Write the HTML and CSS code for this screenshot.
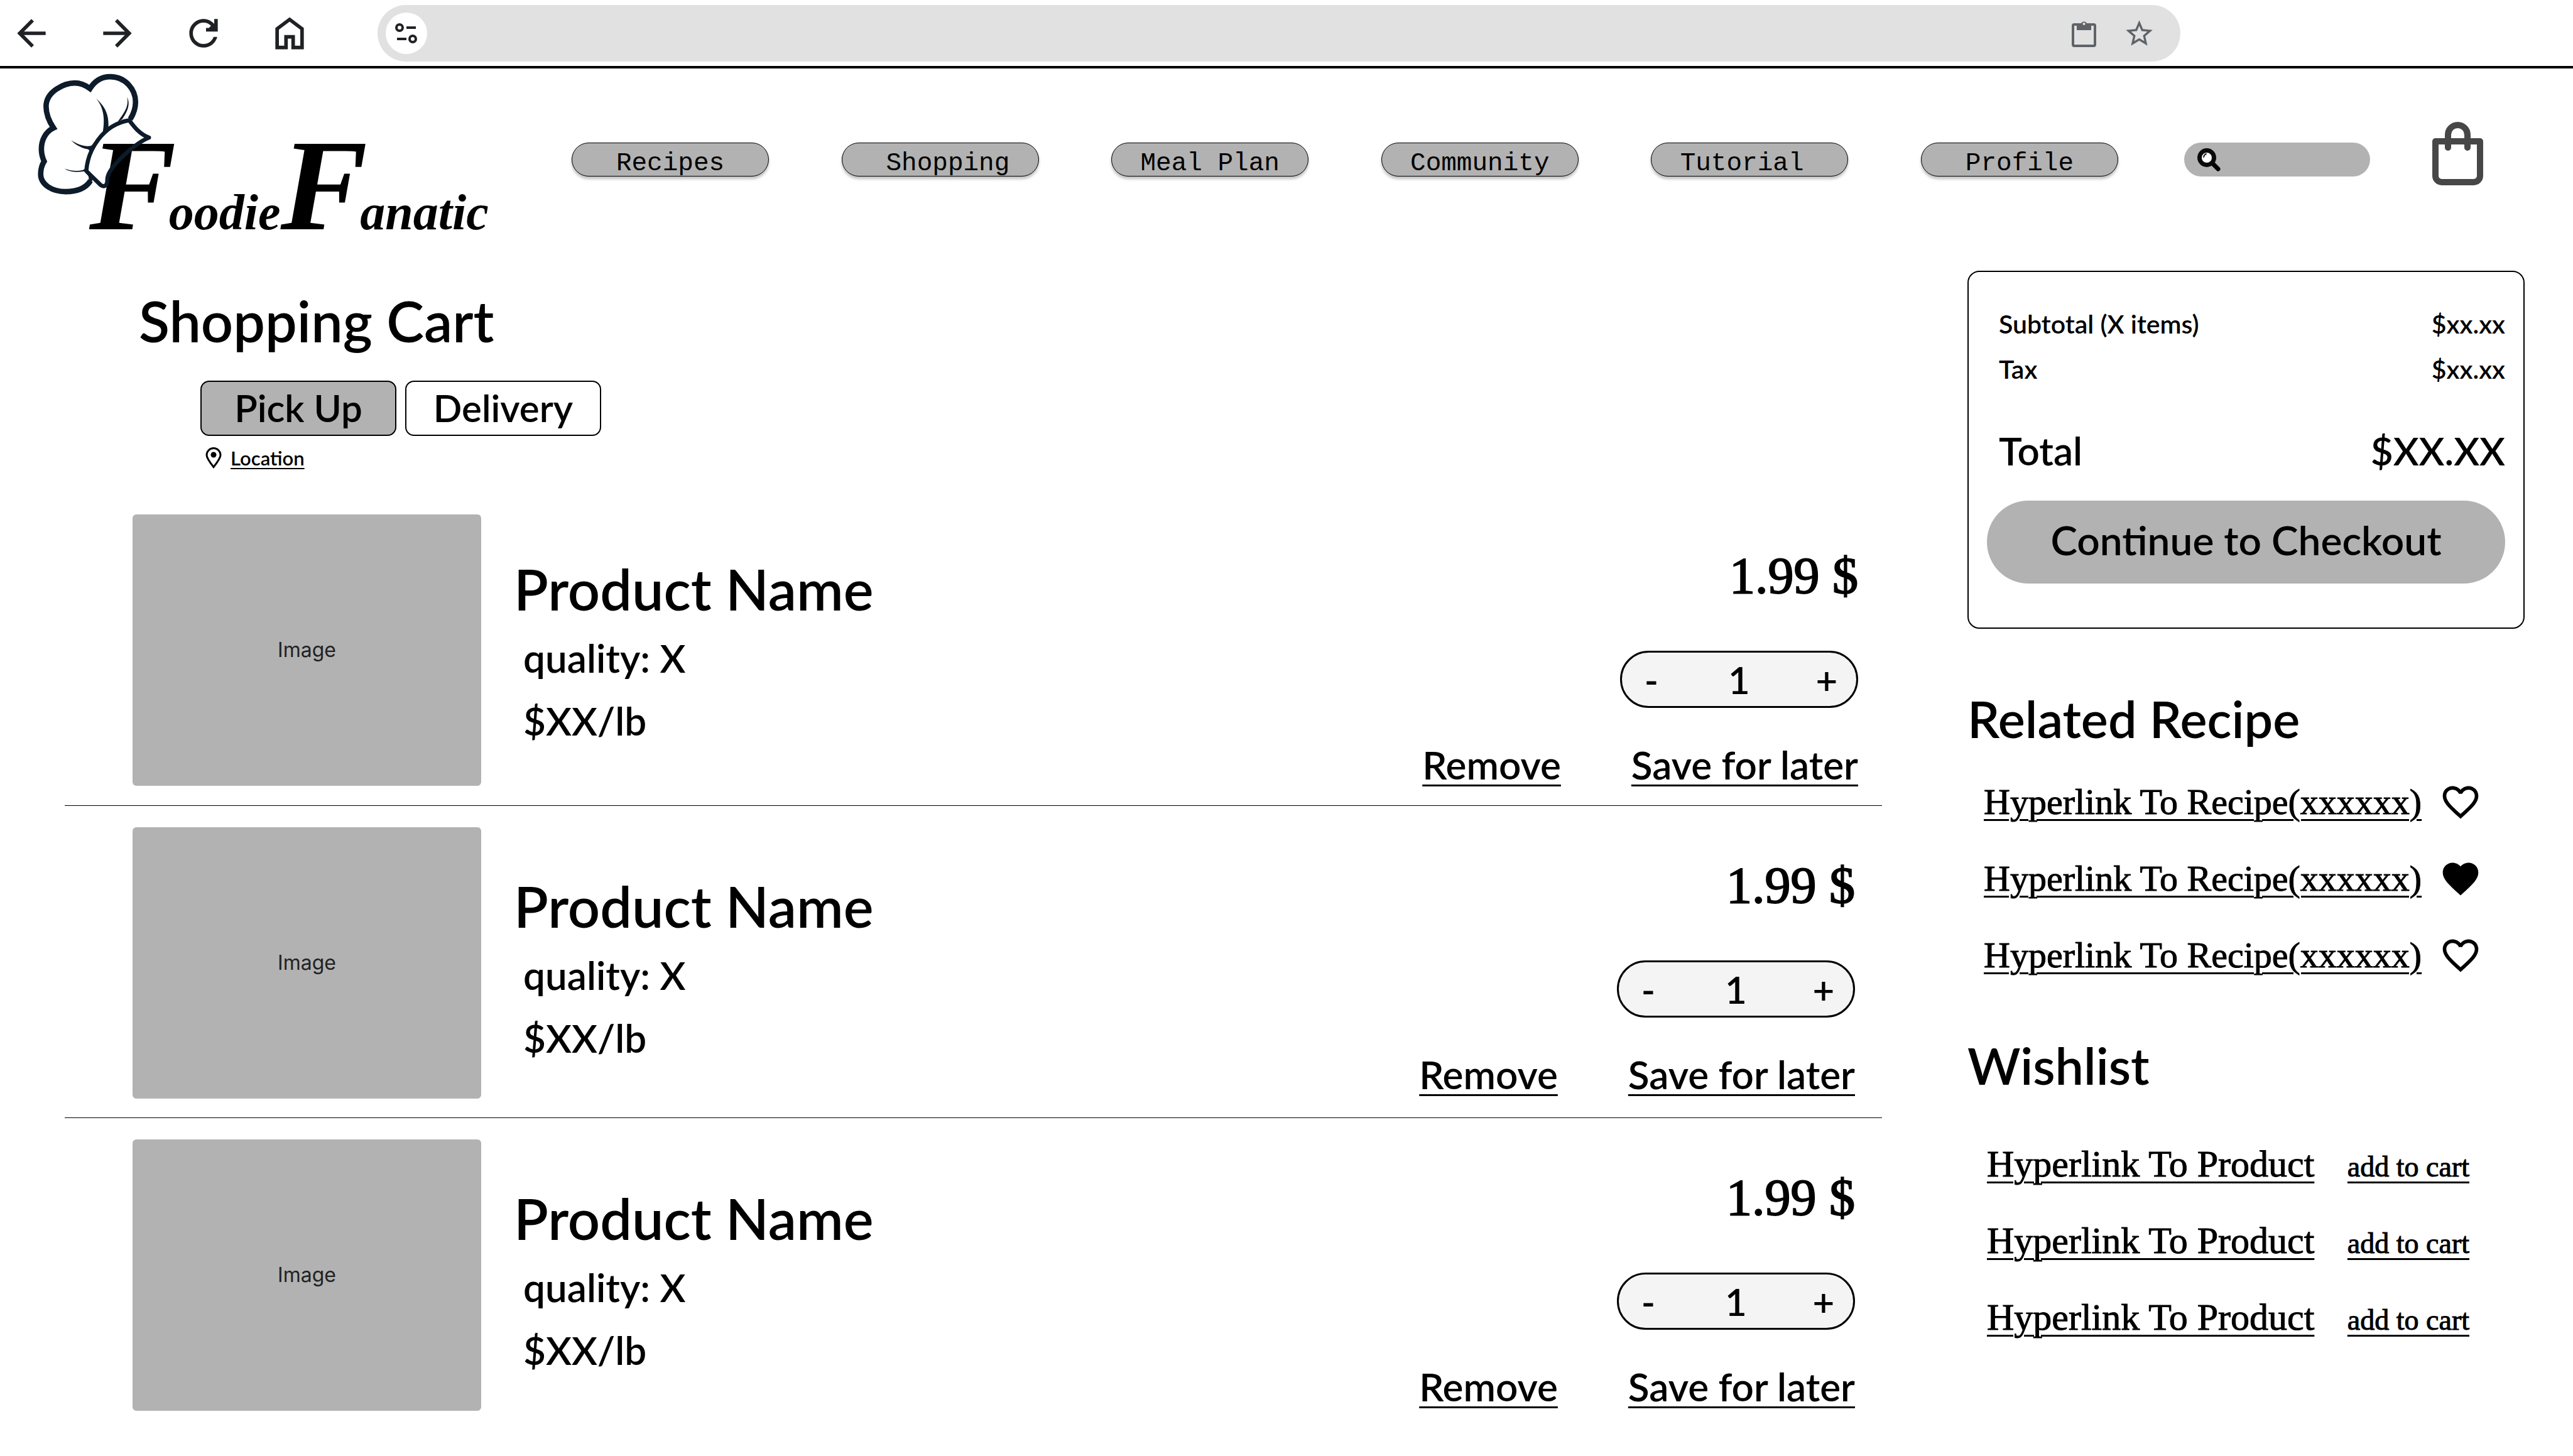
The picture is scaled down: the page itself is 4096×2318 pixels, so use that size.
FILE: index.html
```html
<!DOCTYPE html>
<html lang="en">
<head>
<meta charset="utf-8">
<title>FoodieFanatic – Shopping Cart</title>
<link rel="stylesheet" href="styles.css">
</head>
<body>
<svg class="sprite" aria-hidden="true">
  <symbol id="heart" viewBox="0 0 24 24"><path d="M16.5 3c-1.74 0-3.41.81-4.5 2.09C10.91 3.81 9.24 3 7.5 3 4.42 3 2 5.42 2 8.5c0 3.78 3.4 6.86 8.55 11.54L12 21.35l1.45-1.32C18.6 15.36 22 12.28 22 8.5 22 5.42 19.58 3 16.5 3zm-4.4 15.55l-.1.1-.1-.1C7.14 14.24 4 11.39 4 8.5 4 6.5 5.5 5 7.5 5c1.54 0 3.04.99 3.57 2.36h1.87C13.46 5.99 14.96 5 16.5 5c2 0 3.5 1.5 3.5 3.5 0 2.89-3.14 5.74-7.9 10.05z"/></symbol>
  <symbol id="heart-full" viewBox="0 0 24 24"><path d="M12 21.35l-1.45-1.32C5.4 15.36 2 12.28 2 8.5 2 5.42 4.42 3 7.5 3c1.74 0 3.41.81 4.5 2.09C13.09 3.81 14.76 3 16.5 3 19.58 3 22 5.42 22 8.5c0 3.78-3.4 6.86-8.55 11.54L12 21.35z"/></symbol>
</svg>

<div class="browser">
  <div class="browser-nav">
    <button type="button" class="tool" aria-label="Back"><svg viewBox="0 0 24 24"><path d="M20 11H7.83l5.59-5.59L12 4l-8 8 8 8 1.41-1.41L7.83 13H20v-2z"/></svg></button>
    <button type="button" class="tool" aria-label="Forward"><svg viewBox="0 0 24 24"><path d="M12 4l-1.41 1.41L16.17 11H4v2h12.17l-5.58 5.59L12 20l8-8z"/></svg></button>
    <button type="button" class="tool" aria-label="Reload"><svg viewBox="0 0 24 24"><path d="M17.65 6.35C16.2 4.9 14.21 4 12 4c-4.42 0-7.99 3.58-7.99 8s3.57 8 7.99 8c3.73 0 6.84-2.55 7.73-6h-2.08c-.82 2.33-3.04 4-5.65 4-3.31 0-6-2.69-6-6s2.69-6 6-6c1.66 0 3.14.69 4.22 1.78L15 9h-1.600v2H20V4h-2v2.700z"/></svg></button>
    <button type="button" class="tool" aria-label="Home"><svg viewBox="0 -960 960 960"><path d="M240-200h120v-240h240v240h120v-360L480-740 240-560v360Zm-80 80v-480l320-240 320 240v480H520v-240h-80v240H160Z"/></svg></button>
  </div>
  <div class="address">
    <button type="button" class="site-info" aria-label="Site information">
      <svg viewBox="0 0 36 34" fill="none" stroke="#202124" stroke-width="4"><circle cx="7" cy="8" r="5"/><path d="M18 8h15M3 26h15"/><circle cx="28" cy="26" r="5"/></svg>
    </button>
    <input class="address-input" type="text" aria-label="Address">
    <button type="button" class="address-tool" aria-label="Clipboard"><svg viewBox="0 0 51 51"><path fill="#5f6368" fill-rule="evenodd" d="M6 13a4 4 0 0 1 4-4h11a5 5 0 0 1 9 0h11a4 4 0 0 1 4 4v30a4 4 0 0 1-4 4H10a4 4 0 0 1-4-4zM10 13v30h31V13h-4v7H14V13zM25.500 8a2 2 0 1 0 .1 0z"/></svg></button>
    <button type="button" class="address-tool" aria-label="Bookmark"><svg viewBox="0 0 24 24"><path fill="#5f6368" d="M22 9.240l-7.190-.62L12 2 9.190 8.630 2 9.240l5.460 4.730L5.820 21 12 17.270 18.180 21l-1.630-7.030L22 9.240zM12 15.400l-3.760 2.270 1-4.280-3.320-2.880 4.380-.38L12 6.100l1.710 4.040 4.380.38-3.320 2.880 1 4.280L12 15.400z"/></svg></button>
  </div>
</div>

<header class="site-header">
  <a class="logo" href="#" aria-label="FoodieFanatic">
    <span class="logo-initial">F</span><span class="logo-rest">oodie</span><span class="logo-initial">F</span><span class="logo-rest">anatic</span>
    <svg class="logo-hat" viewBox="80 50 776 828" fill="none" stroke="#0d1b2a" stroke-width="37" stroke-linejoin="miter">
      <path d="M440 783C410 830 350 857 270 857C180 857 100 810 100 738C100 710 105 680 124 650C112 625 105 600 105 565C105 510 130 450 188 422C160 380 137 330 137 275C137 170 265 115 333 115C370 115 400 125 437 153C470 100 520 72 575 72C680 72 748 160 748 245C748 285 735 325 712 362"/>
      <path stroke-width="28" stroke-linejoin="round" d="M705 370C735 410 775 465 840 488C750 525 555 690 555 775C556 815 535 830 510 812L412 716C420 580 520 400 705 370Z"/>
      <path stroke-width="24" d="M412 716C440 735 446 760 438 792"/>
      <g fill="#0d1b2a" stroke="none">
        <path d="M478 220C530 265 568 320 563 415L524 455C536 380 540 290 478 220Z"/>
        <path d="M690 210C712 255 700 300 657 362L624 384C664 325 706 280 690 210Z"/>
        <path d="M308 506C355 535 395 550 435 546Q450 545 460 525L435 590Q434 572 424 568C390 562 345 545 308 506Z"/>
        <path d="M262 700C310 717 350 718 385 711L405 700L412 722L396 718C350 727 300 725 262 700Z"/>
      </g>
    </svg>
  </a>
  <nav class="main-nav" aria-label="Main">
    <a href="#">Recipes</a>
    <a href="#">&nbsp;Shopping</a>
    <a href="#">Meal Plan</a>
    <a href="#">Community</a>
    <a href="#">Tutorial&nbsp;</a>
    <a href="#">Profile</a>
  </nav>
  <form class="search">
    <svg viewBox="0 0 37 37"><path d="M25 25L33 33" stroke="#000" stroke-width="7" stroke-linecap="round"/><circle cx="15" cy="15" r="11.500" fill="#fff" stroke="#0a0a0a" stroke-width="7"/><path d="M10 14q1-4 4-5" fill="none" stroke="#222" stroke-width="2" stroke-linecap="round"/></svg>
    <input type="search" aria-label="Search">
  </form>
  <a class="bag" href="#" aria-label="Shopping bag">
    <svg viewBox="0 0 81 101" fill="none" stroke="#474747" stroke-width="10"><path stroke-linejoin="round" d="M5 31H76V86a10 10 0 0 1-10 10H15A10 10 0 0 1 5 86Z"/><path stroke-linecap="round" d="M25 41V20.500a15.500 15.500 0 0 1 31 0V41"/></svg>
  </a>
</header>

<main class="page">
  <section class="cart">
    <h1>Shopping Cart</h1>
    <div class="modes">
      <button type="button" class="mode mode-active">Pick Up</button>
      <button type="button" class="mode">Delivery</button>
    </div>
    <div class="location">
      <svg viewBox="0 0 26 34"><path fill="none" stroke="#000" stroke-width="3" d="M13 31.500C7 24 2 17.500 2 12.500a11 11 0 0 1 22 0c0 5-5 11.500-11 19z"/><circle cx="13" cy="12" r="4.500"/></svg>
      <a href="#">Location</a>
    </div>

    <ul class="items">
      <li class="item">
        <div class="thumb">Image</div>
        <div class="info">
          <h2>Product Name</h2>
          <p>quality: X</p>
          <p>$XX/lb</p>
        </div>
        <div class="actions">
          <div class="price">1.99 $</div>
          <div class="stepper">
            <button type="button" aria-label="Decrease">-</button>
            <input type="text" value="1" aria-label="Quantity">
            <button type="button" aria-label="Increase">+</button>
          </div>
          <div class="links"><a href="#">Remove</a><a href="#">Save for later</a></div>
        </div>
      </li>
      <li class="item">
        <div class="thumb">Image</div>
        <div class="info">
          <h2>Product Name</h2>
          <p>quality: X</p>
          <p>$XX/lb</p>
        </div>
        <div class="actions">
          <div class="price">1.99 $</div>
          <div class="stepper">
            <button type="button" aria-label="Decrease">-</button>
            <input type="text" value="1" aria-label="Quantity">
            <button type="button" aria-label="Increase">+</button>
          </div>
          <div class="links"><a href="#">Remove</a><a href="#">Save for later</a></div>
        </div>
      </li>
      <li class="item">
        <div class="thumb">Image</div>
        <div class="info">
          <h2>Product Name</h2>
          <p>quality: X</p>
          <p>$XX/lb</p>
        </div>
        <div class="actions">
          <div class="price">1.99 $</div>
          <div class="stepper">
            <button type="button" aria-label="Decrease">-</button>
            <input type="text" value="1" aria-label="Quantity">
            <button type="button" aria-label="Increase">+</button>
          </div>
          <div class="links"><a href="#">Remove</a><a href="#">Save for later</a></div>
        </div>
      </li>
    </ul>
  </section>

  <aside class="side">
    <section class="summary">
      <dl>
        <div class="line"><dt>Subtotal (X items)</dt><dd>$xx.xx</dd></div>
        <div class="line"><dt>Tax</dt><dd>$xx.xx</dd></div>
        <div class="line line-total"><dt>Total</dt><dd>$XX.XX</dd></div>
      </dl>
      <button type="button" class="checkout">Continue to Checkout</button>
    </section>

    <section class="recipes">
      <h2>Related Recipe</h2>
      <ul>
        <li><a href="#">Hyperlink To Recipe(xxxxxx)</a><button type="button" aria-label="Like"><svg><use href="#heart"/></svg></button></li>
        <li><a href="#">Hyperlink To Recipe(xxxxxx)</a><button type="button" aria-label="Unlike"><svg><use href="#heart-full"/></svg></button></li>
        <li><a href="#">Hyperlink To Recipe(xxxxxx)</a><button type="button" aria-label="Like"><svg><use href="#heart"/></svg></button></li>
      </ul>
    </section>

    <section class="wishlist">
      <h2>Wishlist</h2>
      <ul>
        <li><a href="#">Hyperlink To Product</a><a class="add" href="#">add to cart</a></li>
        <li><a href="#">Hyperlink To Product</a><a class="add" href="#">add to cart</a></li>
        <li><a href="#">Hyperlink To Product</a><a class="add" href="#">add to cart</a></li>
      </ul>
    </section>
  </aside>
</main>
</body>
</html>
```

FILE: styles.css
```css
* { box-sizing: border-box; }

body {
  margin: 0;
  background: #fff;
  color: #000;
  font-family: Lato, "Open Sans", sans-serif;
  font-weight: 600;
  overflow-x: hidden;
}

h1, h2, p, ul, dl, dd { margin: 0; padding: 0; font-weight: inherit; }
ul { list-style: none; }
a { color: inherit; }
svg { display: block; }
button, input {
  margin: 0;
  padding: 0;
  border: 0;
  background: none;
  color: inherit;
  font: inherit;
}

.sprite { display: none; }

/* Browser toolbar */
.browser {
  display: flex;
  align-items: center;
  gap: 106px;
  padding: 8px 625px 7px 16px;
  border-bottom: 4px solid #000;
}
.browser-nav { display: flex; gap: 69px; }
.tool svg { width: 68px; height: 68px; fill: #202124; }
.address {
  flex: 1;
  display: flex;
  align-items: center;
  gap: 37px;
  height: 90px;
  padding: 0 40px 0 13px;
  border-radius: 45px;
  background: #e1e1e1;
}
.site-info {
  display: grid;
  place-items: center;
  width: 66px;
  height: 66px;
  border-radius: 50%;
  background: #fff;
}
.site-info svg { width: 36px; height: 34px; }
.address-input { flex: 1; min-width: 0; font-size: 38px; }
.address-tool svg { width: 51px; height: 51px; }

/* Site header */
.site-header {
  display: flex;
  align-items: center;
  min-height: 290px;
  padding: 0 143px 0 60px;
}
.logo {
  position: relative;
  align-self: flex-start;
  display: flex;
  align-items: baseline;
  width: 850px;
  margin-bottom: -40px;
  padding: 82px 0 0 82px;
  font-family: "Liberation Serif", serif;
  font-style: italic;
  font-weight: 700;
  line-height: 1;
  text-decoration: none;
}
.logo-initial { margin-right: -12px; font-size: 208px; }
.logo-rest { font-size: 80px; }
.logo-hat {
  position: absolute;
  top: 8px;
  left: 0;
  width: 181px;
  height: 193px;
}
.main-nav {
  flex: 1;
  display: flex;
  justify-content: space-between;
  margin-right: 105px;
}
.main-nav a {
  width: 314px;
  height: 54px;
  padding-top: 7px;
  border: 1px solid #000;
  border-radius: 27px;
  background: #b2b2b2;
  box-shadow: 0 4px 4px rgba(0, 0, 0, 0.25);
  font: 41px/50px "Liberation Mono", monospace;
  text-align: center;
  text-decoration: none;
}
.search {
  display: flex;
  align-items: center;
  gap: 8px;
  width: 296px;
  height: 54px;
  margin-right: 99px;
  padding: 0 21px;
  border-radius: 27px;
  background: #b2b2b2;
}
.search svg { flex: none; width: 37px; height: 37px; }
.search input { flex: 1; min-width: 0; font-size: 30px; }
.bag { padding-bottom: 20px; }
.bag svg { width: 81px; height: 101px; }

/* Page grid */
.page {
  display: grid;
  grid-template-columns: 1fr 887px;
  gap: 136px;
  padding: 32px 77px 0 103px;
}

/* Cart */
.cart { padding-top: 29px; }
.cart h1 {
  padding-left: 118px;
  font-size: 90px;
  line-height: 100px;
}
.modes {
  display: flex;
  gap: 14px;
  margin-top: 46px;
  padding-left: 216px;
}
.mode {
  width: 312px;
  height: 88px;
  padding-bottom: 2px;
  border: 2px solid #000;
  border-radius: 14px;
  font-size: 60px;
}
.mode-active { background: #b2b2b2; }
.location {
  display: flex;
  align-items: center;
  gap: 14px;
  margin-top: 17px;
  padding-left: 224px;
  font-size: 31px;
  line-height: 36px;
}
.location svg { width: 26px; height: 34px; }

.items { margin-top: 38px; }
.item {
  display: flex;
  padding: 34px 43px 30px 108px;
  border-bottom: 1px solid #000;
}
.item:last-child { border-bottom: 0; }
.thumb {
  display: grid;
  place-items: center;
  width: 555px;
  height: 432px;
  border-radius: 6px;
  background: #b2b2b2;
  color: #222;
  font: 400 32px/40px Inter, sans-serif;
}
.info { flex: 1; padding: 75px 0 0 52px; }
.info h2 { margin-bottom: 10px; font-size: 90px; line-height: 100px; }
.info p { padding-left: 15px; font-size: 62px; line-height: 100px; }
.actions {
  display: flex;
  flex-direction: column;
  align-items: flex-end;
  padding-top: 47px;
}
.price {
  font: 82px/92px "Liberation Serif", serif;
  -webkit-text-stroke: 2px #000;
}
.stepper {
  display: flex;
  width: 379px;
  height: 91px;
  margin-top: 73px;
  border: 3px solid #000;
  border-radius: 46px;
  background: #f4f4f4;
  font-size: 60px;
}
.stepper button { width: 94px; }
.stepper input { flex: 1; min-width: 0; text-align: center; }
.links {
  display: flex;
  gap: 112px;
  margin-top: 55px;
  font-size: 62px;
  line-height: 70px;
}
.item:first-child { padding-right: 38px; }
.item:first-child .info { padding-top: 68px; }
.item:first-child .actions { padding-top: 52px; }

.links a, .side a {
  text-decoration-thickness: 3px;
  text-underline-offset: 8px;
}
.location a {
  text-decoration-thickness: 2px;
  text-underline-offset: 4px;
}

/* Order summary */
.summary {
  padding: 47px 29px 70px;
  border: 2px solid #000;
  border-radius: 19px;
}
.summary dl { padding-left: 19px; }
.line {
  display: flex;
  justify-content: space-between;
  font-size: 41px;
  line-height: 72px;
}
.line-total { margin-top: 53px; font-size: 62px; line-height: 80px; }
.checkout {
  width: 100%;
  height: 132px;
  margin-top: 40px;
  padding-bottom: 8px;
  border-radius: 66px;
  background: #b2b2b2;
  font-size: 64px;
}

/* Side lists */
.side h2 { font-size: 81px; line-height: 92px; }
.side li {
  display: flex;
  align-items: center;
  justify-content: space-between;
  height: 122px;
  font: 58px/66px "Liberation Serif", serif;
  -webkit-text-stroke: 1px #000;
}
.recipes { margin-top: 97px; }
.recipes ul { margin-top: 26px; padding: 0 68px 0 26px; }
.recipes svg { width: 68px; height: 68px; }
.wishlist { margin-top: 68px; }
.wishlist ul { margin-top: 50px; padding: 0 88px 0 31px; }
.wishlist li { align-items: baseline; padding-top: 28px; font-size: 60px; }
.wishlist .add { font-size: 46px; }
```
